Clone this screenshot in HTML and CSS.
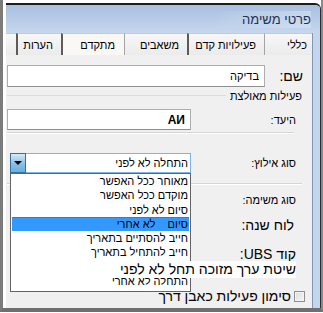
FILE: index.html
```html
<!DOCTYPE html>
<html lang="he" dir="rtl">

<head>
    <meta charset="UTF-8">
    <meta name="viewport" content="width=device-width, initial-scale=1.0">
    <title>פרטי משימה</title>
    <link rel="stylesheet" href="styles.css">
</head>

<body>
    <div class="shot">
        <div class="window">
            <div class="titlebar">
                <span class="title">פרטי משימה</span>
            </div>

            <div class="frame-body">
                <div class="side"></div>

                <div class="client">
                    <div class="tabs">
                        <div class="tab tab-general">כללי</div>
                        <div class="tab tab-pred dark">פעילויות קדם</div>
                        <div class="tab tab-res">משאבים</div>
                        <div class="tab tab-adv dark active">מתקדם</div>
                        <div class="tab tab-notes dark">הערות</div>
                        <div class="tab tab-cut"></div>
                    </div>

                    <div class="page">
                        <div class="row name-row">
                            <div class="label">שם:</div>
                            <div class="textbox">בדיקה</div>
                        </div>

                        <div class="row group-row">
                            <div class="label">פעילות מאולצת</div>
                            <div class="group-line"></div>
                        </div>

                        <div class="row goal-row">
                            <div class="label">היעד:</div>
                            <div class="textbox goal-box">AИ</div>
                        </div>

                        <div class="divider"></div>

                        <div class="row link-row">
                            <div class="label">סוג אילוץ:</div>
                            <div class="combo">
                                <div class="combo-text">התחלה לא לפני</div>
                                <div class="combo-btn"><span class="arrow"></span></div>
                            </div>
                        </div>

                        <div class="divider divider-wide"></div>

                        <div class="row text-row type-row">סוג משימה:</div>
                        <div class="row text-row big calendar-row">לוח שנה:</div>
                        <div class="row text-row big ubs-row">קוד UBS:</div>
                        <div class="row text-row big earned-row"><span class="over">שיטת ערך מזוכה תחל לא לפני</span></div>
                        <div class="row big check-row">
                            <span class="checkbox"></span>
                            <span>סימון פעילות כאבן דרך</span>
                        </div>

                        <ul class="droplist">
                            <li>מאוחר ככל האפשר</li>
                            <li>מוקדם ככל האפשר</li>
                            <li>סיום לא לפני</li>
                            <li class="selected">סיום&nbsp;&nbsp;&nbsp;&nbsp;לא אחרי</li>
                            <li>חייב להסתיים בתאריך</li>
                            <li>חייב להתחיל בתאריך</li>
                            <li class="covered">התחלה לא לפני</li>
                            <li>התחלה לא אחרי</li>
                        </ul>
                    </div>
                </div>
            </div>
        </div>
    </div>
</body>

</html>
```

FILE: styles.css
```css
* {
    box-sizing: border-box;
    margin: 0;
    padding: 0;
}

body {
    width: 323px;
    height: 313px;
    overflow: hidden;
    background: #fff;
    color: #000;
    font-family: "Liberation Sans", "DejaVu Sans", sans-serif;
    font-size: 11px;
}

.shot {
    width: 323px;
    height: 312px;
    padding-top: 3px;
    border-left: 3px solid #7b7b7b;
    border-right: 2px solid #8a8a8a;
    border-bottom: 4px solid #6f6f6f;
}

.window {
    width: 315px;
    height: 305px;
    display: flex;
    flex-direction: column;
    overflow: hidden;
    border-top: 2px solid #1b1b1b;
    border-right: 1px solid #2b2b2b;
    border-top-right-radius: 6px;
}

.titlebar {
    height: 28px;
    display: flex;
    align-items: center;
    padding-right: 9px;
    background: linear-gradient(#a9bfdf, #c6d7ee);
}

.title {
    font-size: 13px;
    color: #1d3354;
    padding: 1px 0 1px 30px;
    background: linear-gradient(to left, rgba(214, 228, 245, 0.6), rgba(214, 228, 245, 0));
}

.frame-body {
    flex: 1;
    display: flex;
}

.side {
    width: 8px;
    background: #c4d6ee;
    border-left: 1px solid #8396b5;
}

.client {
    flex: 1;
    display: flex;
    flex-direction: column;
    background: #f0f0f0;
}

/* tabs */
.tabs {
    height: 22px;
    display: flex;
}

.tab {
    height: 22px;
    display: flex;
    align-items: center;
    padding-right: 8px;
    white-space: nowrap;
    overflow: hidden;
    border-top: 1px solid #c9c9c9;
    border-left: 1px solid #a4a4a4;
    background: linear-gradient(#f7f7f7, #ebebeb);
}

.tab.dark {
    border-left: 2px solid #5b5b5b;
}

.tab.active {
    background: #faf8f5;
}

.tab-general { width: 48px; padding-right: 5px; }
.tab-pred { width: 77px; }
.tab-res { width: 63px; }
.tab-adv { width: 63px; padding-right: 9px; }
.tab-notes { width: 45px; }
.tab-cut { flex: 1; border-left: none; }

/* page */
.page {
    flex: 1;
    position: relative;
    overflow: hidden;
    padding: 10px 9px 0 1px;
}

.row {
    display: flex;
    align-items: center;
    white-space: nowrap;
}

.textbox {
    height: 100%;
    display: flex;
    align-items: center;
    padding-right: 5px;
    background: #fff;
    border: 1px solid #abadb3;
    border-bottom-color: #8e8f8f;
}

.name-row {
    height: 22px;
}

.name-row .label {
    width: 38px;
    font-size: 14px;
}

.name-row .textbox {
    width: 258px;
}

.group-row {
    height: 22px;
    align-items: flex-start;
}

.group-row .label {
    line-height: 18px;
    padding-right: 1px;
}

.group-line {
    flex: 1;
    margin: 8px 4px 0 0;
    border-top: 1px solid #dcdcdc;
}

.goal-row {
    height: 21px;
}

.goal-row .label,
.link-row .label {
    width: 112px;
    padding-right: 7px;
}

.goal-box {
    width: 184px;
    font-size: 12px;
    font-weight: bold;
}

.divider {
    margin: 2px 9px 0 0;
    border-top: 1px solid #d5d5d5;
    border-bottom: 1px solid #fff;
}

.divider-wide {
    margin: 10px 1px 0 0;
}

.link-row {
    height: 20px;
    margin-top: 19px;
}

.combo {
    width: 181px;
    height: 20px;
    display: flex;
    background: #fff;
    border: 1px solid #7eb4ea;
    border-left: none;
}

.combo-text {
    flex: 1;
    padding-right: 2px;
    line-height: 18px;
}

.combo-btn {
    width: 16px;
    margin-top: -1px;
    height: 20px;
    display: flex;
    align-items: center;
    justify-content: center;
    border: 1px solid #3c6f98;
    background: linear-gradient(#d6ecfa, #8cc3ea 50%, #6aaee0);
}

.arrow {
    width: 0;
    height: 0;
    border-left: 4px solid transparent;
    border-right: 4px solid transparent;
    border-top: 4px solid #000;
}

.text-row {
    padding-right: 7px;
}

.big {
    font-size: 14px;
}

.type-row {
    height: 30px;
}

.calendar-row {
    height: 20px;
    padding-right: 9px;
}

.ubs-row {
    height: 14px;
    line-height: 14px;
    margin-top: 12px;
}

.earned-row {
    height: 17px;
    line-height: 17px;
    position: relative;
    z-index: 2;
}

.over {
    background: #fff;
    padding: 0 0 0 2px;
}

.check-row {
    height: 20px;
    margin-top: 8px;
    margin-right: -2px;
    gap: 3px;
}

.checkbox {
    width: 11px;
    height: 11px;
    border: 1px solid #8f8f8f;
    background: linear-gradient(135deg, #dcdcdc, #f6f6f6);
    box-shadow: inset 0 0 0 1px #f4f4f4;
}

/* open dropdown */
.droplist {
    position: absolute;
    top: 118px;
    left: 4px;
    width: 181px;
    height: 119px;
    list-style: none;
    background: #fff;
    border: 1px solid #646464;
    z-index: 1;
}

.droplist li {
    height: 14.3px;
    line-height: 14.3px;
    padding-right: 2px;
    white-space: nowrap;
}

.droplist li.selected {
    margin: 0 1px;
    padding-right: 1px;
    background: #3399ff;
    border-top: 1px solid #2a7fd8;
    line-height: 13px;
}

/* hidden under the label that is drawn over the list */
.droplist li.covered {
    visibility: hidden;
}
```
